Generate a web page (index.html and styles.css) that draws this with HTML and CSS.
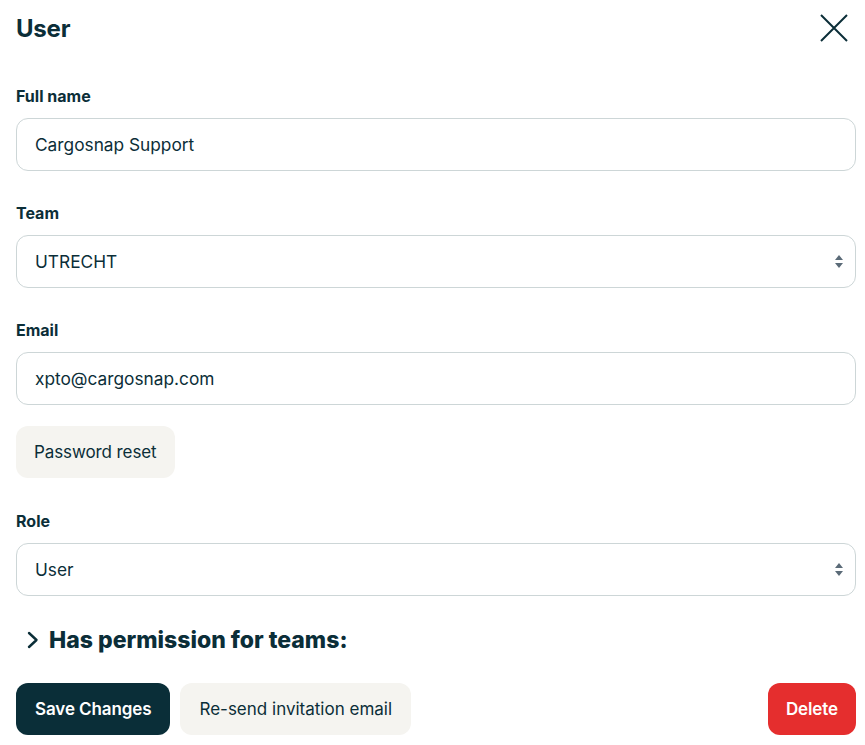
FILE: index.html
```html
<!DOCTYPE html>
<html>
<head>
<meta charset="utf-8">
<link rel="stylesheet" href="styles.css">
</head>
<body>
<div class="panel">
  <header class="head">
    <h1 class="title">User</h1>
    <button class="close" aria-label="Close">
      <svg width="28" height="28" viewBox="0 0 28 28"><path d="M1 1 L27 27 M27 1 L1 27" stroke="#0b2e38" stroke-width="2" fill="none"/></svg>
    </button>
  </header>

  <div class="field">
    <label class="label">Full name</label>
    <div class="input">Cargosnap Support</div>
  </div>

  <div class="field">
    <label class="label">Team</label>
    <div class="input select">UTRECHT<span class="arrows"><svg width="8" height="13" viewBox="0 0 8 13"><path d="M4 0 L8 5 L0 5 Z M0 8 L8 8 L4 13 Z" fill="#5b6b78"/></svg></span></div>
  </div>

  <div class="field tight">
    <label class="label">Email</label>
    <div class="input">xpto@cargosnap.com</div>
  </div>

  <div class="field">
    <button class="btn light">Password reset</button>
  </div>

  <div class="field">
    <label class="label">Role</label>
    <div class="input select">User<span class="arrows"><svg width="8" height="13" viewBox="0 0 8 13"><path d="M4 0 L8 5 L0 5 Z M0 8 L8 8 L4 13 Z" fill="#5b6b78"/></svg></span></div>
  </div>

  <div class="perm">
    <svg class="chev" width="12" height="18" viewBox="0 0 12 18"><path d="M2 2 L9.5 9 L2 16" stroke="#0b2e38" stroke-width="2.4" fill="none" stroke-linecap="round" stroke-linejoin="round"/></svg>
    <span>Has permission for teams:</span>
  </div>

  <div class="actions">
    <button class="btn dark">Save Changes</button>
    <button class="btn light wide">Re-send invitation email</button>
    <button class="btn red">Delete</button>
  </div>
</div>
</body>
</html>
```

FILE: styles.css
```css
* { box-sizing: border-box; }
html, body { margin: 0; padding: 0; background: #fff; }
body {
  font-family: "Inter", "Liberation Sans", sans-serif;
  color: #0b2e38;
}
.panel {
  width: 865px;
  padding: 14px 9px 0 16px;
  display: flex;
  flex-direction: column;
}
.head {
  display: flex;
  justify-content: space-between;
  align-items: flex-start;
  height: 72px;
}
.title {
  margin: 0;
  font-size: 24px;
  font-weight: 700;
  line-height: 30px;
  letter-spacing: -0.2px;
}
.close {
  border: 0;
  background: none;
  padding: 0;
  margin-right: 8px;
  width: 28px;
  height: 28px;
}
.field {
  display: flex;
  flex-direction: column;
  margin-bottom: 32px;
}
.field.tight { margin-bottom: 21px; }
.label {
  font-size: 16px;
  font-weight: 700;
  line-height: 20px;
  margin-bottom: 12px;
}
.input {
  height: 53px;
  border: 1px solid #cdd6d7;
  border-radius: 12px;
  padding: 0 18px;
  display: flex;
  align-items: center;
  font-size: 17.3px;
}
.select { justify-content: space-between; padding-right: 12px; }
.arrows { display: flex; }
.btn {
  height: 52px;
  border: 0;
  border-radius: 12px;
  padding: 0 18px;
  font-family: inherit;
  font-size: 17px;
  letter-spacing: -0.1px;
  color: #0b2e38;
  align-self: flex-start;
}
.field .btn { margin-bottom: 1px; }
.light { background: #f5f4f0; }
.wide { padding: 0 19px; letter-spacing: 0; }
.dark { background: #0a2e38; color: #fff; font-weight: 600; padding: 0 19px; }
.red { background: #e52e2e; color: #fff; font-weight: 600; }
.perm {
  display: flex;
  align-items: center;
  gap: 10px;
  padding-left: 11px;
  margin-top: -2px;
  height: 28px;
  font-size: 23px;
  font-weight: 800;
}
.actions {
  display: flex;
  gap: 10px;
  margin-top: 29px;
}
.actions .red { margin-left: auto; }
```
